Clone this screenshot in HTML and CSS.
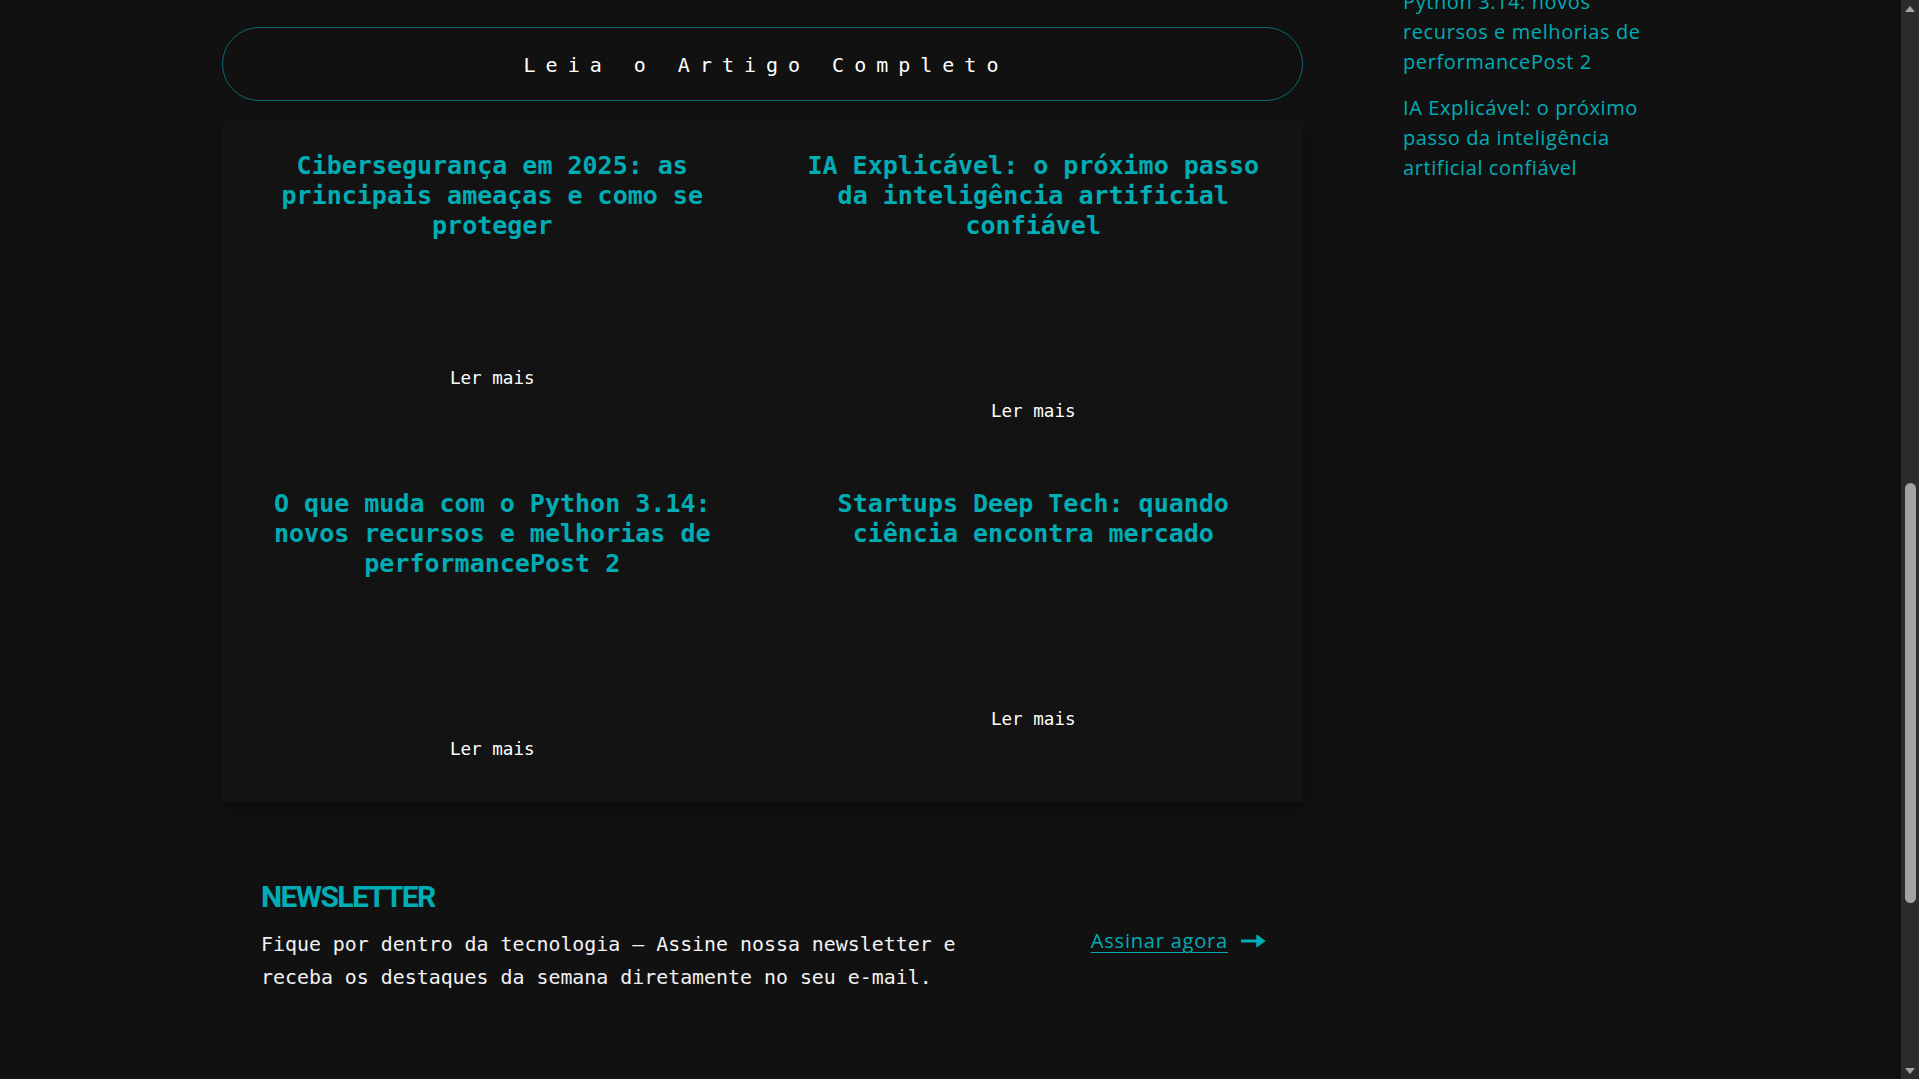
FILE: index.html
```html
<!DOCTYPE html>
<html lang="pt-BR">
<head>
<meta charset="utf-8">
<title>Blog</title>
<link rel="stylesheet" href="styles.css">
</head>
<body>
<div class="viewport">
  <div class="layout">
    <main class="main">
      <a class="read-btn" href="#">Leia o Artigo Completo</a>

      <section class="posts">
        <article class="card">
          <h3 class="card-title">Cibersegurança em 2025: as principais ameaças e como se proteger</h3>
          <a class="more more-short" href="#">Ler mais</a>
        </article>
        <article class="card card-right">
          <h3 class="card-title">IA Explicável: o próximo passo da inteligência artificial confiável</h3>
          <a class="more" href="#">Ler mais</a>
        </article>
        <article class="card">
          <h3 class="card-title">O que muda com o Python 3.14: novos recursos e melhorias de performancePost 2</h3>
          <a class="more" href="#">Ler mais</a>
        </article>
        <article class="card card-right">
          <h3 class="card-title">Startups Deep Tech: quando ciência encontra mercado</h3>
          <a class="more" href="#">Ler mais</a>
        </article>
      </section>

      <section class="newsletter">
        <div class="nl-text">
          <h2 class="nl-title">NEWSLETTER</h2>
          <p class="nl-desc">Fique por dentro da tecnologia — Assine nossa newsletter e receba os destaques da semana diretamente no seu e-mail.</p>
        </div>
        <a class="nl-link" href="#"><span class="nl-link-text">Assinar agora</span>
          <svg class="nl-arrow" width="26" height="16" viewBox="0 0 26 16" aria-hidden="true">
            <path d="M1 8 H22" stroke="#00ADB5" stroke-width="3" fill="none" stroke-linecap="round"/>
            <path d="M16 2.5 L23.5 8 L16 13.5 Z" fill="#00ADB5" stroke="#00ADB5" stroke-width="1.5" stroke-linejoin="round"/>
          </svg>
        </a>
      </section>
    </main>

    <aside class="sidebar">
      <ul class="side-list">
        <li><a href="#">O que muda com o Python 3.14: novos recursos e melhorias de performancePost 2</a></li>
        <li><a href="#">IA Explicável: o próximo passo da inteligência artificial confiável</a></li>
      </ul>
    </aside>
  </div>
</div>

<div class="scrollbar" aria-hidden="true">
  <div class="sb-up"></div>
  <div class="sb-track"><div class="sb-thumb"></div></div>
  <div class="sb-down"></div>
</div>
</body>
</html>
```

FILE: styles.css
```css
html, body {
  margin: 0;
  padding: 0;
  height: 1079px;
  overflow: hidden;
  background: #111111;
}

body {
  display: flex;
  font-family: "DejaVu Sans Mono", "Liberation Mono", monospace;
  color: #f2f2f2;
}

a {
  text-decoration: none;
}

.viewport {
  flex: 1;
  overflow: hidden;
}

.layout {
  width: 1457px;
  margin: 0 auto;
  display: grid;
  grid-template-columns: 1081px 250px;
  column-gap: 100px;
  justify-content: start;
  align-items: start;
}

/* ---------- main column ---------- */
.main {
  padding-top: 27px;
}

.read-btn {
  display: block;
  height: 72px;
  line-height: 74px;
  border: 1px solid #0b6a70;
  border-radius: 38px;
  text-align: center;
  color: #ffffff;
  font-family: "DejaVu Sans Mono", monospace;
  font-size: 20px;
  letter-spacing: 10px;
  padding-left: 7px;
}

.posts {
  margin-top: 20px;
  display: grid;
  grid-template-columns: 1fr 1fr;
  background: #131313;
  box-shadow: 0 5px 10px rgba(0, 0, 0, 0.35);
  padding-bottom: 5px;
}

.card {
  display: flex;
  flex-direction: column;
  align-items: center;
  padding: 30px 40px 37px;
}

.card-right {
  border-left: 1px solid #101010;
}

.card-title {
  margin: 0;
  font-family: "DejaVu Sans Mono", monospace;
  font-weight: 700;
  font-size: 25px;
  line-height: 30px;
  color: #00ADB5;
  text-align: center;
}

.more {
  margin-top: 159px;
  font-family: "DejaVu Sans Mono", monospace;
  font-size: 17.6px;
  line-height: 22px;
  color: #ffffff;
}

.more-short {
  margin-top: 126px;
}

/* ---------- newsletter ---------- */
.newsletter {
  margin-top: 77px;
  padding: 0 36px 0 39px;
  display: flex;
  justify-content: space-between;
  align-items: center;
}

.nl-text {
  width: 740px;
}

.nl-title {
  margin: 0 0 13px;
  font-family: "Roboto", "Liberation Sans", sans-serif;
  font-weight: 700;
  font-size: 30px;
  line-height: 36px;
  letter-spacing: -1.6px;
  color: #00ADB5;
}

.nl-desc {
  margin: 0;
  font-family: "DejaVu Sans Mono", monospace;
  font-size: 19.9px;
  line-height: 33px;
  color: #f2f2f2;
}

.nl-link {
  display: flex;
  align-items: center;
  gap: 13px;
  padding-top: 8px;
  color: #00ADB5;
}

.nl-link-text {
  font-family: "Open Sans", "Liberation Sans", sans-serif;
  font-size: 20px;
  letter-spacing: 0.8px;
  text-decoration: underline;
  text-underline-offset: 4px;
  text-decoration-thickness: 1px;
}

.nl-arrow {
  display: block;
}

/* ---------- sidebar ---------- */
.sidebar {
  margin-top: -43px;
}

.side-list {
  list-style: none;
  margin: 0;
  padding: 0;
}

.side-list li {
  margin-bottom: 16px;
  font-family: "Open Sans", "Liberation Sans", sans-serif;
  font-size: 20px;
  line-height: 30px;
  letter-spacing: 0.6px;
}

.side-list a {
  color: #00ADB5;
}

/* ---------- fake scrollbar ---------- */
.scrollbar {
  width: 18px;
  height: 1079px;
  background: #2b2b2b;
  display: flex;
  flex-direction: column;
  align-items: center;
}

.sb-up,
.sb-down {
  width: 0;
  height: 0;
  border-left: 5px solid transparent;
  border-right: 5px solid transparent;
}

.sb-up {
  margin-top: 6px;
  border-bottom: 6px solid #a3a3a3;
}

.sb-down {
  margin-bottom: 5px;
  border-top: 6px solid #a3a3a3;
}

.sb-track {
  flex: 1;
  width: 100%;
  display: flex;
  flex-direction: column;
  align-items: center;
  padding-top: 471px;
}

.sb-thumb {
  width: 11px;
  height: 420px;
  border-radius: 6px;
  background: #a3a3a3;
}
```
